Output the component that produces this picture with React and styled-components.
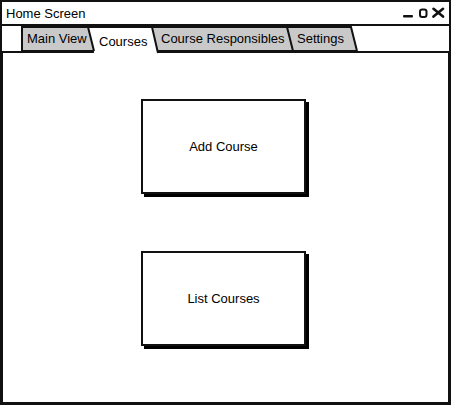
import React from 'react';
import styled, { createGlobalStyle } from 'styled-components';

const GlobalStyle = createGlobalStyle`
  html, body {
    margin: 0;
    padding: 0;
    background: #ffffff;
  }
  body {
    font-family: "Liberation Sans", Arial, sans-serif;
    color: #000000;
  }
`;

const Window = styled.div`
  box-sizing: border-box;
  width: 451px;
  height: 405px;
  border: 2px solid #111;
  display: flex;
  flex-direction: column;
  background: #fff;
`;

const TitleBar = styled.div`
  height: 22px;
  border-bottom: 2px solid #111;
  display: flex;
  align-items: center;
  justify-content: space-between;
  padding: 0 3px 0 4px;
`;

const Title = styled.span`
  font-size: 13px;
  line-height: 1;
`;

const TabStrip = styled.div`
  display: flex;
  align-items: flex-end;
  height: 27px;
  padding-left: 20px;
  position: relative;
  z-index: 1;
  margin-bottom: -2px;
`;

const TabBox = styled.div`
  position: relative;
  width: ${p => p.$w}px;
  height: ${p => (p.$active ? 26 : 24)}px;
  margin-left: ${p => (p.$first ? 0 : -6)}px;
  margin-bottom: ${p => (p.$active ? 0 : 2)}px;
  z-index: ${p => 10 - p.$index};
  flex-shrink: 0;
`;

const TabShape = styled.svg`
  position: absolute;
  inset: 0;
  overflow: visible;
`;

const TabLabel = styled.span`
  position: relative;
  display: block;
  font-size: 13px;
  line-height: 15px;
  padding-left: ${p => p.$pad}px;
  padding-top: ${p => (p.$active ? 7 : 4)}px;
  white-space: nowrap;
`;

const Panel = styled.div`
  flex: 1;
  border-top: 2px solid #111;
  border-left: 1px solid #111;
  border-right: 1px solid #111;
  border-bottom: 1px solid #111;
  display: flex;
  flex-direction: column;
  align-items: center;
  padding: 46px 4px 0 0;
  gap: 57px;
`;

const ActionBox = styled.div`
  box-sizing: border-box;
  width: 165px;
  height: 95px;
  border: 2px solid #111;
  box-shadow: 3px 3px 0 #000;
  display: flex;
  align-items: center;
  justify-content: center;
  font-size: 13px;
  background: #fff;
`;

const tabs = [
  { label: 'Main View', w: 72, pad: 5 },
  { label: 'Courses', w: 70, pad: 11, active: true },
  { label: 'Course Responsibles', w: 141, pad: 9 },
  { label: 'Settings', w: 70, pad: 10 },
];

const WindowControls = () => (
  <svg width="44" height="12" viewBox="0 0 44 12">
    <rect x="1" y="8" width="10" height="2.6" rx="1" fill="#111" />
    <rect x="18" y="2.5" width="6.5" height="7.5" rx="2.2" fill="none" stroke="#111" strokeWidth="2" />
    <path d="M31.5 1.8 L41 9.6 M41 1.8 L31.5 9.6" stroke="#111" strokeWidth="2.6" strokeLinecap="round" />
  </svg>
);

const Tab = ({ label, w, pad, active, index }) => {
  const h = active ? 26 : 24;
  const s = 6;
  const first = index === 0;
  const fill = active ? '#ffffff' : '#c9c9c9';
  const leftBottom = first ? 0 : s;
  return (
    <TabBox $w={w} $active={active} $first={first} $index={index}>
      <TabShape width={w} height={h}>
        <polygon points={`0,0 ${w - s},0 ${w},${h} ${leftBottom},${h}`} fill={fill} />
        <path
          d={`M0 ${first ? h : 0} L0 0 L${w - s} 0 L${w} ${h}`}
          fill="none"
          stroke="#111"
          strokeWidth="2"
        />
        {!active && <path d={`M${leftBottom} ${h} L${w} ${h}`} stroke="#111" strokeWidth="2" />}
      </TabShape>
      <TabLabel $pad={pad} $active={active}>{label}</TabLabel>
    </TabBox>
  );
};

const App = () => (
  <>
    <GlobalStyle />
    <Window>
      <TitleBar>
        <Title>Home Screen</Title>
        <WindowControls />
      </TitleBar>
      <TabStrip>
        {tabs.map((t, i) => (
          <Tab key={t.label} index={i} {...t} />
        ))}
      </TabStrip>
      <Panel>
        <ActionBox>Add Course</ActionBox>
        <ActionBox>List Courses</ActionBox>
      </Panel>
    </Window>
  </>
);

export default App;
